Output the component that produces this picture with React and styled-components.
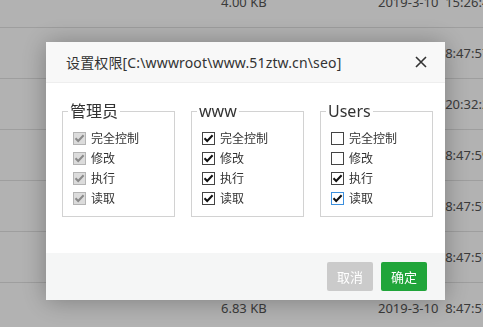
import React, { useState } from 'react';
import styled, { createGlobalStyle } from 'styled-components';

const GlobalStyle = createGlobalStyle`
  html, body {
    margin: 0;
    padding: 0;
    background: #fff;
    overflow: hidden;
  }
  body {
    font-family: "Noto Sans", "Noto Sans CJK SC", sans-serif;
    color: #333;
  }
`;

const Page = styled.div`
  width: 483px;
  height: 327px;
  overflow: hidden;
`;

const FileList = styled.div`
  margin-top: -23px;
`;

const FileRow = styled.div`
  display: grid;
  grid-template-columns: 221px 157px 1fr;
  height: 50px;
  align-items: center;
  border-bottom: 1px solid #e2e2e2;
  font-size: 13px;
  color: #555;
  white-space: pre;
`;

const Cell = styled.span`
  overflow: visible;
`;

const Shade = styled.div`
  position: fixed;
  inset: 0;
  background: rgba(0, 0, 0, 0.3);
`;

const Dialog = styled.div`
  position: fixed;
  left: 46px;
  top: 42px;
  width: 399px;
  height: 258px;
  background: #fff;
  box-shadow: 0 1px 24px rgba(0, 0, 0, 0.3);
  display: flex;
  flex-direction: column;
`;

const Header = styled.div`
  height: 40px;
  flex-shrink: 0;
  display: flex;
  align-items: center;
  justify-content: space-between;
  padding: 0 16px 0 20px;
  background: #f8f8f8;
  border-bottom: 1px solid #eee;
  font-size: 14px;
  letter-spacing: 0.15px;
  color: #333;
`;

const CloseButton = styled.button`
  border: 0;
  background: none;
  padding: 0;
  width: 16px;
  height: 16px;
  display: flex;
  align-items: center;
  justify-content: center;
  cursor: pointer;
`;

const Body = styled.div`
  flex: 1;
  display: grid;
  grid-template-columns: repeat(3, 113px);
  column-gap: 16px;
  align-content: start;
  padding: 18px 12px 0 16px;
`;

const Group = styled.fieldset`
  margin: 0;
  padding: 0 10px 8px 10px;
  border: 1px solid #d2d2d2;
  display: flex;
  flex-direction: column;
  min-width: 0;
`;

const Legend = styled.legend`
  margin-left: -5px;
  padding: 0 2px;
  font-size: 16px;
  line-height: 20px;
  color: #333;
`;

const Option = styled.label`
  display: flex;
  align-items: center;
  gap: 5px;
  height: 20px;
  font-size: 12px;
  color: #333;
  cursor: ${p => (p.$disabled ? 'default' : 'pointer')};
  &:first-of-type {
    margin-top: 7px;
  }
`;

const Box = styled.span`
  box-sizing: border-box;
  width: 13px;
  height: 13px;
  flex-shrink: 0;
  display: flex;
  align-items: center;
  justify-content: center;
  border: 1px solid ${p => (p.$disabled ? '#b4b4b4' : p.$focus ? '#3c8fdd' : '#444')};
  background: ${p => (p.$disabled ? '#dcdcdc' : '#fff')};
`;

const Footer = styled.div`
  height: 46px;
  flex-shrink: 0;
  display: flex;
  justify-content: flex-end;
  align-items: center;
  gap: 8px;
  padding: 0 18px 1px 0;
  background: #f5f6f6;
`;

const Button = styled.button`
  width: 46px;
  height: 29px;
  border: 0;
  border-radius: 2px;
  font-family: inherit;
  font-size: 13px;
  color: #fff;
  background: ${p => (p.$primary ? '#20a53a' : '#cbcbcb')};
  cursor: pointer;
`;

const rows = [
  ['4.00 KB', '2019-3-10  15:26:41'],
  ['', '2019-3-10  8:47:57'],
  ['', '2019-3-10  20:32:21'],
  ['', '2019-3-10  8:47:59'],
  ['', '2019-3-10  8:47:57'],
  ['', '2019-3-10  8:47:57'],
  ['6.83 KB', '2019-3-10  8:47:57'],
];

const perms = ['完全控制', '修改', '执行', '读取'];

const initialGroups = [
  { name: '管理员', values: [true, true, true, true], disabled: true },
  { name: 'www', values: [true, true, true, true] },
  { name: 'Users', values: [false, false, true, true], focus: 3 },
];

function Check({ checked, disabled, focus }) {
  return (
    <Box $disabled={disabled} $focus={focus}>
      {checked && (
        <svg width="11" height="11" viewBox="0 0 11 11">
          <path
            d="M1.5 5.2 L4.2 8 L9.6 2.2"
            fill="none"
            stroke={disabled ? '#8a8a8a' : '#111'}
            strokeWidth="2"
          />
        </svg>
      )}
    </Box>
  );
}

export default function App() {
  const [groups, setGroups] = useState(initialGroups);

  const toggle = (gi, pi) => {
    setGroups(gs =>
      gs.map((g, i) =>
        i !== gi || g.disabled
          ? g
          : { ...g, values: g.values.map((v, j) => (j === pi ? !v : v)) }
      )
    );
  };

  return (
    <Page>
      <GlobalStyle />
      <FileList>
        {rows.map((r, i) => (
          <FileRow key={i}>
            <span />
            <Cell>{r[0]}</Cell>
            <Cell>{r[1]}</Cell>
          </FileRow>
        ))}
      </FileList>
      <Shade />
      <Dialog>
        <Header>
          <span>设置权限[C:\wwwroot\www.51ztw.cn\seo]</span>
          <CloseButton aria-label="关闭">
            <svg width="12" height="12" viewBox="0 0 12 12">
              <path d="M1 1 L11 11 M11 1 L1 11" stroke="#333" strokeWidth="1.6" />
            </svg>
          </CloseButton>
        </Header>
        <Body>
          {groups.map((g, gi) => (
            <Group key={g.name}>
              <Legend>{g.name}</Legend>
              {perms.map((p, pi) => (
                <Option key={p} $disabled={g.disabled} onClick={() => toggle(gi, pi)}>
                  <Check checked={g.values[pi]} disabled={g.disabled} focus={g.focus === pi} />
                  {p}
                </Option>
              ))}
            </Group>
          ))}
        </Body>
        <Footer>
          <Button>取消</Button>
          <Button $primary>确定</Button>
        </Footer>
      </Dialog>
    </Page>
  );
}
